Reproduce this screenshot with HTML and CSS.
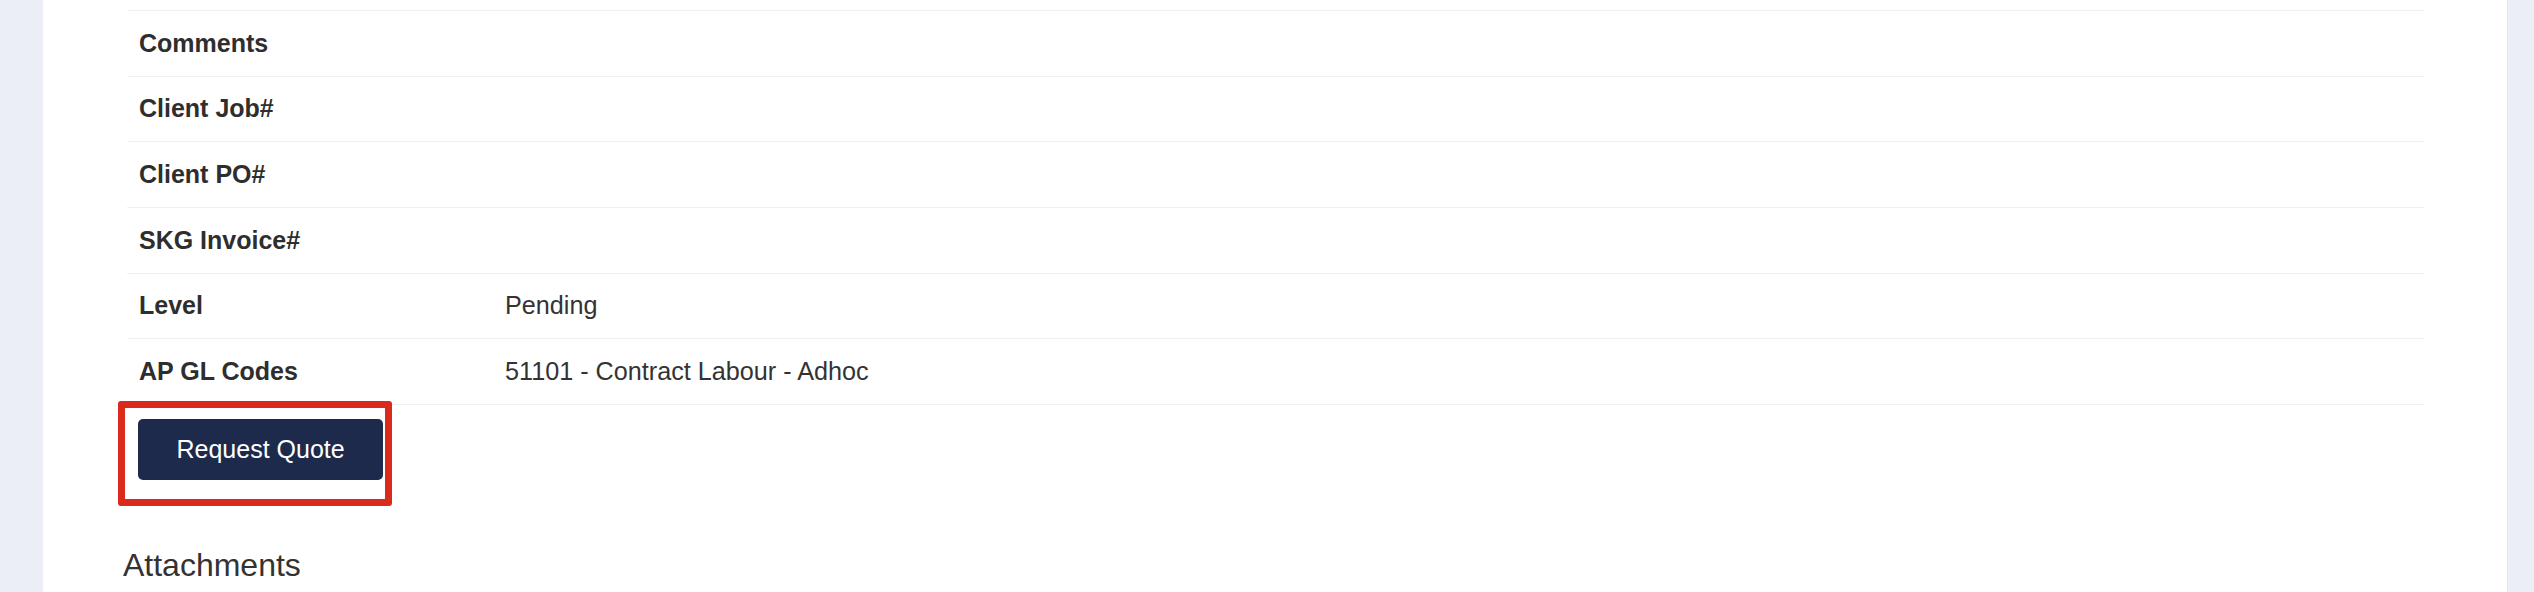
FILE: index.html
```html
<!DOCTYPE html>
<html lang="en">
<head>
<meta charset="utf-8">
<title>Job details</title>
<link rel="stylesheet" href="styles.css">
</head>
<body>
<div class="page">
  <main class="panel">
    <div class="details">
      <div class="row"><div class="label">Comments</div><div class="value"></div></div>
      <div class="row"><div class="label">Client Job#</div><div class="value"></div></div>
      <div class="row"><div class="label">Client PO#</div><div class="value"></div></div>
      <div class="row"><div class="label">SKG Invoice#</div><div class="value"></div></div>
      <div class="row"><div class="label">Level</div><div class="value">Pending</div></div>
      <div class="row"><div class="label">AP GL Codes</div><div class="value">51101 - Contract Labour - Adhoc</div></div>
    </div>
    <div class="actions">
      <button class="btn" type="button">Request Quote</button>
      <div class="highlight"></div>
    </div>
    <h2 class="section-title">Attachments</h2>
  </main>
</div>
</body>
</html>
```
FILE: styles.css
```css
html, body {
  margin: 0;
  padding: 0;
}
body {
  background: #eceef5;
  font-family: "Liberation Sans", Arial, Helvetica, sans-serif;
  color: #333333;
  height: 592px;
  overflow: hidden;
}
.page {
  display: flex;
  padding: 0 26px 0 42.7px;
  height: 592px;
  box-sizing: border-box;
}
.panel {
  flex: 1;
  background: #ffffff;
  border-right: 1px solid #e5e7ef;
  padding: 10px 83px 0 84.3px;
}
.details {
  border-top: 1px solid #f0f0f0;
}
.row {
  display: grid;
  grid-template-columns: 366px 1fr;
  align-items: center;
  height: 65.67px;
  box-sizing: border-box;
  border-bottom: 1px solid #f0f0f0;
  font-size: 25px;
}
.label {
  font-weight: bold;
  padding: 0 12px;
  color: #2e2e2e;
}
.value {
  padding: 0 12px;
  color: #333333;
  font-size: 25.2px;
}
.actions {
  position: relative;
  padding: 14.5px 0 0 11.5px;
}
.btn {
  display: inline-block;
  font-family: inherit;
  font-size: 25px;
  line-height: 37.5px;
  padding: 11.5px 38px;
  color: #ffffff;
  background: #1e2a4b;
  border: 0;
  border-radius: 5px;
  cursor: pointer;
}
.highlight {
  position: absolute;
  left: -8.7px;
  top: -4.3px;
  width: 273.7px;
  height: 105.3px;
  box-sizing: border-box;
  border: 7.5px solid #da2a1c;
  border-radius: 3px;
  pointer-events: none;
}
.section-title {
  margin: 65.7px 0 0 -4px;
  font-size: 32px;
  font-weight: normal;
  line-height: 1.2;
  color: #333333;
}
```
